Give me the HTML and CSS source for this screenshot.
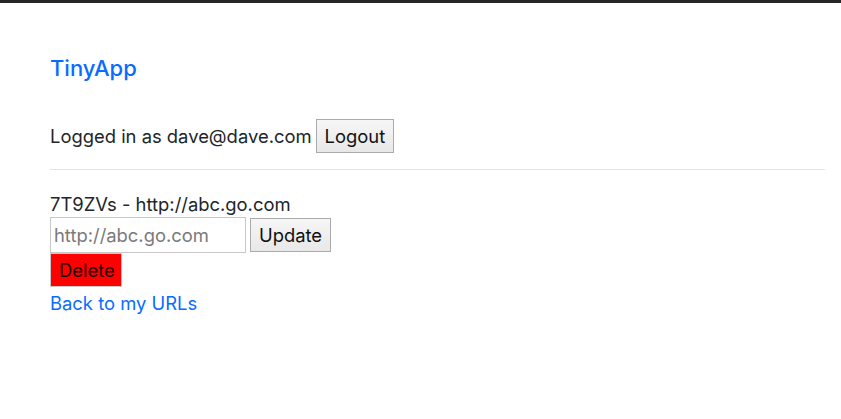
FILE: index.html
```html
<!DOCTYPE html>
<html>
<head>
<meta charset="utf-8">
<link rel="stylesheet" href="styles.css">
</head>
<body>
<div class="topbar"></div>
<div class="page">
  <header class="header">
    <a class="brand" href="#">TinyApp</a>
    <div class="login">
      <span>Logged in as dave@dave.com</span>
      <button class="btn">Logout</button>
    </div>
  </header>
  <hr class="rule">
  <main class="content">
    <div class="title">7T9ZVs - http://abc.go.com</div>
    <form class="edit">
      <input class="field" type="text" placeholder="http://abc.go.com">
      <button class="btn" type="button">Update</button>
    </form>
    <button class="btn btn-delete" type="button">Delete</button>
    <a class="back" href="#">Back to my URLs</a>
  </main>
</div>
</body>
</html>
```

FILE: styles.css
```css
html, body {
  margin: 0;
  padding: 0;
  background: #fff;
}
body {
  font-family: Inter, "Liberation Sans", Arial, sans-serif;
  font-size: 18.4px;
  color: #212529;
}
.topbar {
  height: 3px;
  background: #262626;
}
.page {
  padding: 0 16px 0 50px;
}
.header {
  display: flex;
  flex-direction: column;
  padding-top: 53px;
}
.brand {
  color: #0a6cff;
  text-decoration: none;
  font-size: 22px;
  font-weight: 500;
  line-height: 24px;
}
.login {
  display: flex;
  align-items: center;
  gap: 4px;
  margin-top: 39px;
  height: 34px;
}
.btn {
  font-family: Inter, "Liberation Sans", Arial, sans-serif;
  font-size: 18.4px;
  color: #111;
  background: linear-gradient(#f6f6f6, #e8e8e8);
  border: 1px solid #aaa;
  padding: 0 8px;
  height: 34px;
  margin: 0;
}
.rule {
  border: 0;
  border-top: 1px solid #e4e4e4;
  margin: 16px 0 0;
}
.content {
  display: flex;
  flex-direction: column;
  align-items: flex-start;
  padding-top: 22px;
}
.title {
  line-height: 24px;
  height: 24px;
}
.edit {
  display: flex;
  align-items: center;
  gap: 4px;
  margin: 1px 0 0;
}
.field {
  width: 196px;
  height: 36px;
  box-sizing: border-box;
  border: 1px solid #c8c8c8;
  font-family: Inter, "Liberation Sans", Arial, sans-serif;
  font-size: 18.4px;
  padding: 0 3px;
  margin: 0;
}
.field::placeholder {
  color: #7a7a7a;
}
.btn-delete {
  background: #ff0000;
  border-color: #c8c8c8;
  color: #1a0000;
  margin-top: 0;
  width: 72px;
}
.back {
  color: #0a6cff;
  text-decoration: none;
  margin-top: 5px;
  line-height: 22px;
}
```
